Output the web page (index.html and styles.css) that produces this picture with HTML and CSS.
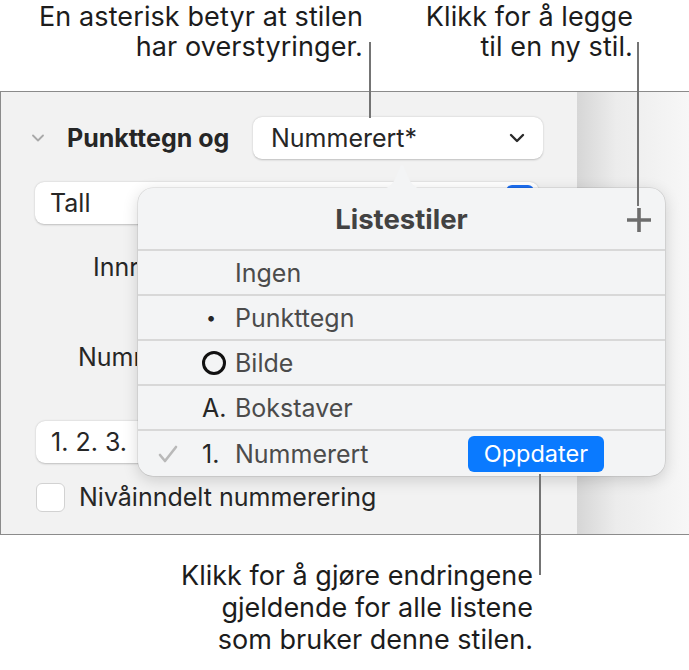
FILE: index.html
```html
<!DOCTYPE html>
<html lang="no">
<head>
  <meta charset="UTF-8" />
  <meta name="viewport" content="width=device-width, initial-scale=1.0"/>
  <title>Listestiler</title>
  <link rel="stylesheet" href="styles.css">
</head>
<body>
  <div class="page">
    <div class="notes-top">
      <p class="note note-asterisk">En asterisk betyr at stilen<br>har overstyringer.</p>
      <p class="note note-add">Klikk for å legge<br>til en ny stil.</p>
    </div>

    <div class="shot">
      <div class="panel">
        <div class="section-head">
          <svg class="disclosure" width="12" height="8" viewBox="0 0 12 8"><path d="M1 1.5 L6 6.5 L11 1.5" fill="none" stroke="#a9a9a9" stroke-width="1.8" stroke-linecap="round" stroke-linejoin="round"/></svg>
          <span class="section-title">Punkttegn og</span>
          <div class="select-btn">
            <span>Nummerert*</span>
            <svg width="16" height="10" viewBox="0 0 16 10"><path d="M2 2 L8 8 L14 2" fill="none" stroke="#2b2b2b" stroke-width="2.4" stroke-linecap="round" stroke-linejoin="round"/></svg>
          </div>
        </div>
        <div class="field field-type">
          <span>Tall</span>
          <span class="field-arrow"></span>
        </div>
        <div class="label label-indent">Innrykk:</div>
        <div class="label label-num">Nummerering:</div>
        <div class="field field-format"><span>1. 2. 3.</span></div>
        <div class="check-row">
          <span class="checkbox"></span>
          <span>Nivåinndelt nummerering</span>
        </div>
      </div>
      <div class="side"></div>
    </div>

    <div class="popover">
      <svg class="popover-tip" width="50" height="27" viewBox="0 0 50 27"><path d="M0 26.5 C9 26.5 13 24 17 18 L23 4 Q25 0 27 4 L33 18 C37 24 41 26.5 50 26.5 Z" fill="#f3f4f5"/></svg>
      <div class="popover-head">
        <span class="popover-title">Listestiler</span>
        <svg class="add-icon" width="26" height="26" viewBox="0 0 26 26"><path d="M13 1 V25 M1 13 H25" stroke="#6d6d6d" stroke-width="3.6"/></svg>
      </div>
      <div class="style-row">
        <span class="check"></span><span class="marker"></span><span class="style-name">Ingen</span>
      </div>
      <div class="style-row">
        <span class="check"></span><span class="marker marker-bullet">•</span><span class="style-name">Punkttegn</span>
      </div>
      <div class="style-row">
        <span class="check"></span><span class="marker"><span class="ring"></span></span><span class="style-name">Bilde</span>
      </div>
      <div class="style-row">
        <span class="check"></span><span class="marker">A.</span><span class="style-name">Bokstaver</span>
      </div>
      <div class="style-row">
        <span class="check">
          <svg width="20" height="18" viewBox="0 0 20 18"><path d="M2 10 L7 16 L18 2" fill="none" stroke="#b9b9b9" stroke-width="2.6" stroke-linecap="round" stroke-linejoin="round"/></svg>
        </span>
        <span class="marker">1.</span><span class="style-name">Nummerert</span>
        <span class="update-btn">Oppdater</span>
      </div>
    </div>

    <div class="notes-bottom">
      <p class="note note-update">Klikk for å gjøre endringene<br>gjeldende for alle listene<br>som bruker denne stilen.</p>
    </div>

    <span class="leader leader-asterisk"></span>
    <span class="leader leader-add"></span>
    <span class="leader leader-update"></span>
  </div>
</body>
</html>
```

FILE: styles.css
```css
body {
  margin: 0;
  background: white;
  font-family: 'Inter', 'Noto Sans', sans-serif;
  color: #1c1c1c;
}
.page {
  position: relative;
  width: 689px;
  height: 670px;
  overflow: hidden;
}

/* callout texts */
.note {
  margin: 0;
  font-size: 27px;
  line-height: 30px;
  text-align: right;
  white-space: nowrap;
}
.notes-top {
  display: flex;
  height: 91px;
  padding-top: 2px;
  box-sizing: border-box;
}
.note-asterisk {
  width: 363px;
  letter-spacing: 0.1px;
}
.note-add {
  width: 270px;
  letter-spacing: 0.1px;
}
.notes-bottom {
  display: flex;
  padding-top: 25px;
}
.note-update {
  width: 533px;
  line-height: 32px;
}
.leader {
  position: absolute;
  width: 2px;
  background: #747474;
}
.leader-asterisk { left: 369px; top: 42px; height: 76px; }
.leader-add { left: 637px; top: 42px; height: 164px; }
.leader-update { left: 539px; top: 474px; height: 101px; }

/* screenshot frame */
.shot {
  display: flex;
  height: 444px;
  border: 1.5px solid #8b8b8b;
  border-right: none;
  box-sizing: border-box;
}
.panel {
  width: 576px;
  background: #f2f2f2;
  display: flex;
  flex-direction: column;
  font-size: 25px;
  color: #262626;
}
.side {
  flex: 1;
  background: linear-gradient(90deg, #d6d6d6, #ececec 35%, #f7f7f7);
}
.section-head {
  display: flex;
  align-items: center;
  height: 42px;
  margin-top: 25px;
  padding-left: 31px;
}
.disclosure {
  margin-right: 23px;
}
.section-title {
  font-weight: 700;
  width: 186px;
}
.select-btn {
  display: flex;
  align-items: center;
  justify-content: space-between;
  width: 290px;
  height: 42px;
  box-sizing: border-box;
  padding: 0 18px;
  background: white;
  border-radius: 9px;
  box-shadow: 0 0.5px 2px rgba(0,0,0,0.22);
}
.field {
  display: flex;
  align-items: center;
  height: 42px;
  box-sizing: border-box;
  padding: 0 15px;
  background: white;
  border-radius: 9px;
  box-shadow: 0 0.5px 2px rgba(0,0,0,0.22);
}
.field-type {
  margin: 23px 0 0 34px;
  width: 504px;
  justify-content: space-between;
  padding-right: 5px;
}
.field-arrow {
  width: 28px;
  height: 36px;
  border-radius: 6px;
  background: #1c6ef2;
}
/* labels run under the popover, so clip them at its left edge */
.label {
  width: 136px;
  box-sizing: border-box;
  line-height: 30px;
  white-space: nowrap;
  overflow: hidden;
}
.label-indent {
  margin-top: 28px;
  padding-left: 92px;
}
.label-num {
  margin-top: 60px;
  padding-left: 77px;
}
.field-format {
  margin: 49px 0 0 35px;
  width: 260px;
}
.check-row {
  display: flex;
  align-items: center;
  margin: 19px 0 0 35px;
  gap: 14px;
}
.checkbox {
  width: 29px;
  height: 29px;
  box-sizing: border-box;
  background: white;
  border: 1px solid #d2d2d2;
  border-radius: 6px;
}

/* popover with list styles */
.popover {
  position: absolute;
  left: 138px;
  top: 188px;
  width: 527px;
  height: 288px;
  background: #f3f4f5;
  border-radius: 15px;
  box-shadow: 0 0 0 0.5px rgba(0,0,0,0.14), 0 4px 16px rgba(0,0,0,0.16);
  color: #4b4b4b;
  font-size: 25px;
}
.popover-tip {
  position: absolute;
  left: 239px;
  top: -25px;
}
.popover-head {
  position: relative;
  display: flex;
  align-items: center;
  justify-content: center;
  height: 61px;
  border-bottom: 2px solid #d8d8d8;
}
.popover-title {
  font-weight: 700;
  font-size: 27.5px;
  color: #424242;
}
.add-icon {
  position: absolute;
  right: 13px;
  top: 19px;
}
.style-row {
  display: grid;
  grid-template-columns: 44px 26px 1fr auto;
  align-items: center;
  height: 45px;
  box-sizing: border-box;
  padding: 0 61px 0 20px;
  border-bottom: 2px solid #d8d8d8;
}
.style-row:last-child {
  border-bottom: none;
}
.check {
  display: flex;
  align-items: center;
}
.marker {
  display: flex;
  justify-content: flex-start;
  color: #262626;
  white-space: nowrap;
}
.marker-bullet {
  padding-left: 4px;
  font-size: 18px;
}
.ring {
  width: 18px;
  height: 18px;
  border: 3px solid #111;
  border-radius: 50%;
}
.style-name {
  padding-left: 7px;
}
.update-btn {
  display: flex;
  align-items: center;
  height: 36px;
  padding: 0 16px;
  border-radius: 6px;
  background: #0a7aff;
  color: white;
  font-size: 23.5px;
}
```
